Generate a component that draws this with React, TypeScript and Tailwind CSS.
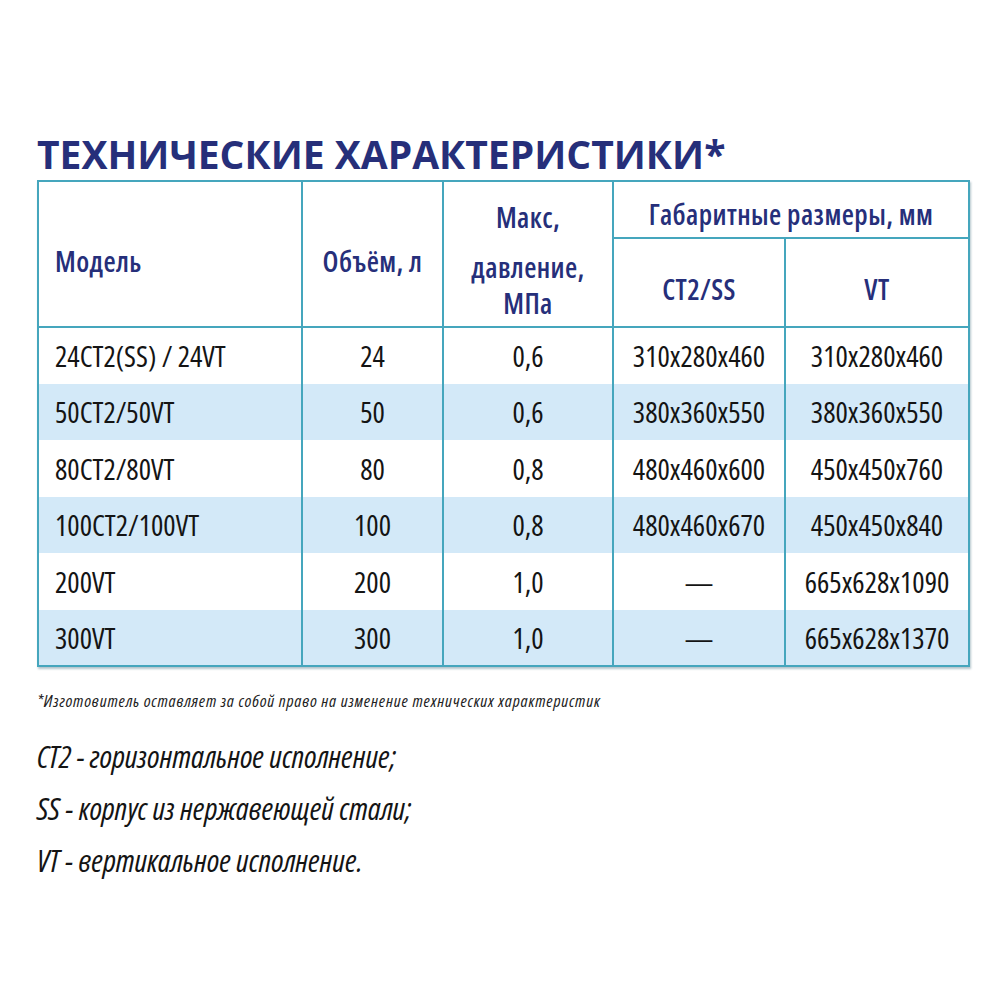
const rows = [
  { model: '24CT2(SS) / 24VT', vol: '24', p: '0,6', ct: '310x280x460', vt: '310x280x460' },
  { model: '50CT2/50VT', vol: '50', p: '0,6', ct: '380x360x550', vt: '380x360x550' },
  { model: '80CT2/80VT', vol: '80', p: '0,8', ct: '480x460x600', vt: '450x450x760' },
  { model: '100CT2/100VT', vol: '100', p: '0,8', ct: '480x460x670', vt: '450x450x840' },
  { model: '200VT', vol: '200', p: '1,0', ct: '—', vt: '665x628x1090' },
  { model: '300VT', vol: '300', p: '1,0', ct: '—', vt: '665x628x1370' },
]

// Open Sans in its condensed width stands in for the brochure's condensed face
const narrow = "font-['Open_Sans',sans-serif] font-stretch-condensed"
const line = 'border-2 border-[#45a6bd]'

export default function App() {
  return (
    <div className="h-[1000px] w-[1000px] bg-white">
      <div className="pl-[37px] pt-[128px]">
        <h1 className="font-['Open_Sans',sans-serif] text-[39px] font-bold leading-[52px] text-[#262f7a]">
          ТЕХНИЧЕСКИЕ ХАРАКТЕРИСТИКИ*
        </h1>

        <table className={`w-[931px] table-fixed border-collapse ${line} shadow-[1px_2px_2px_rgba(40,90,110,0.35)] ${narrow}`}>
          <colgroup>
            <col className="w-[264px]" />
            <col className="w-[141px]" />
            <col className="w-[170px]" />
            <col className="w-[172px]" />
            <col className="w-[184px]" />
          </colgroup>
          <thead className="text-[28px] leading-[36px] tracking-[0.4px] text-[#262f7a]">
            <tr className="h-[57px]">
              <th rowSpan={2} className={`${line} pl-[16px] pt-[14px] text-left font-semibold`}>Модель</th>
              <th rowSpan={2} className={`${line} pt-[14px] text-center font-semibold`}>Объём, л</th>
              <th rowSpan={2} className={`${line} pt-[12px] text-center font-semibold`}>
                <div>Макс,</div>
                <div className="mt-[14px]">давление,</div>
                <div>МПа</div>
              </th>
              <th colSpan={2} className={`${line} pt-[8px] text-center font-semibold`}>Габаритные размеры, мм</th>
            </tr>
            <tr className="h-[89px]">
              <th className={`${line} pt-[12px] text-center font-semibold`}>CT2/SS</th>
              <th className={`${line} pt-[12px] text-center font-semibold`}>VT</th>
            </tr>
          </thead>
          <tbody className="text-[29px] text-[#141414]">
            {rows.map((r, i) => (
              <tr key={r.model} className={`h-[56.5px] ${i % 2 === 1 ? 'bg-[#d3e9f8]' : 'bg-white'}`}>
                <td className="border-x-2 border-[#45a6bd] pl-[16px]">{r.model}</td>
                <td className="border-x-2 border-[#45a6bd] text-center">{r.vol}</td>
                <td className="border-x-2 border-[#45a6bd] text-center">{r.p}</td>
                <td className="border-x-2 border-[#45a6bd] text-center">{r.ct}</td>
                <td className="border-x-2 border-[#45a6bd] text-center">{r.vt}</td>
              </tr>
            ))}
          </tbody>
        </table>

        <p className={`mt-[23px] text-[17px] italic leading-[22px] tracking-[0.8px] text-[#222] ${narrow}`}>
          *Изготовитель оставляет за собой право на изменение технических характеристик
        </p>

        <div className={`mt-[24px] flex flex-col gap-[12px] text-[31px] italic leading-[40px] text-[#141414] ${narrow}`}>
          <p>СТ2 - горизонтальное исполнение;</p>
          <p>SS - корпус из нержавеющей стали;</p>
          <p>VT - вертикальное исполнение.</p>
        </div>
      </div>
    </div>
  )
}
